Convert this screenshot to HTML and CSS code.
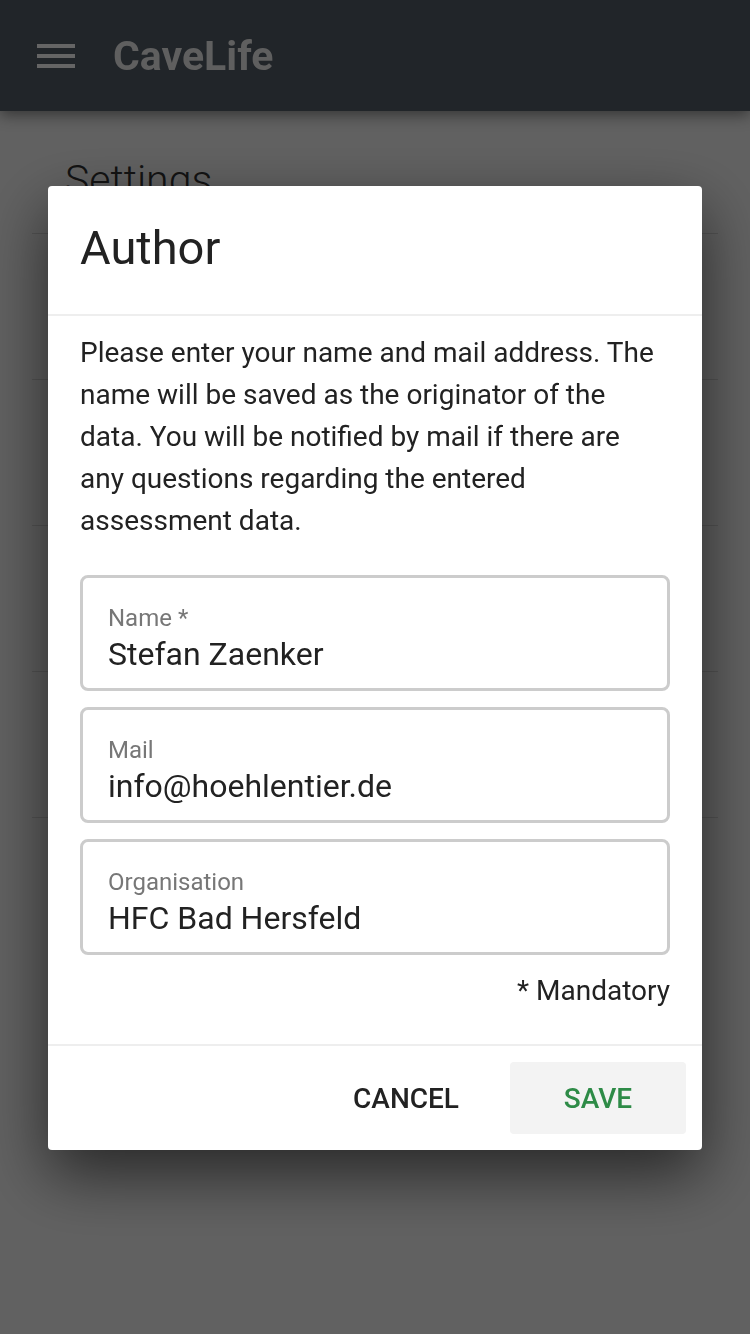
FILE: index.html
```html
<!DOCTYPE html>
<html lang="en">
<head>
  <meta charset="UTF-8" />
  <meta name="viewport" content="width=device-width, initial-scale=1.0"/>
  <title>CaveLife</title>
  <link rel="stylesheet" href="styles.css">
</head>
<body>

  <header class="app-bar">
    <div class="menu-btn">
      <span></span><span></span><span></span>
    </div>
    <div class="app-title">CaveLife</div>
  </header>

  <main class="page">
    <h1 class="page-title">Settings</h1>
    <ul class="settings-list">
      <li></li>
      <li></li>
      <li></li>
      <li></li>
      <li></li>
    </ul>
  </main>

  <div class="overlay">
    <div class="dialog">
      <div class="dialog-header">
        <h2>Author</h2>
      </div>
      <div class="dialog-body">
        <p class="intro">Please enter your name and mail address. The name will be saved as the originator of the data. You will be notified by mail if there are any questions regarding the entered assessment data.</p>

        <label class="field">
          <span class="field-label">Name *</span>
          <input type="text" value="Stefan Zaenker" />
        </label>
        <label class="field">
          <span class="field-label">Mail</span>
          <input type="text" value="info@hoehlentier.de" />
        </label>
        <label class="field">
          <span class="field-label">Organisation</span>
          <input type="text" value="HFC Bad Hersfeld" />
        </label>

        <div class="hint">* Mandatory</div>
      </div>
      <div class="dialog-footer">
        <button class="btn">Cancel</button>
        <button class="btn btn-save">Save</button>
      </div>
    </div>
  </div>

</body>
</html>
```

FILE: styles.css
```css
body {
  margin: 0;
  font-family: Roboto, 'Liberation Sans', sans-serif;
  background: #ffffff;
  color: #222;
  height: 1334px;
  overflow: hidden;
}
.app-bar {
  position: relative;
  z-index: 20;
  height: 111px;
  background: #212529;
  display: flex;
  align-items: center;
  padding-left: 37px;
  box-shadow: 0 4px 14px rgba(0, 0, 0, 0.45);
}
.menu-btn {
  width: 38px;
  display: flex;
  flex-direction: column;
  gap: 6px;
  margin-top: 1px;
}
.menu-btn span {
  display: block;
  height: 4px;
  background: #656565;
}
.app-title {
  margin-left: 38px;
  font-size: 41px;
  font-weight: bold;
  color: #5f5f5f;
}
.page {
  padding: 40px 32px 0;
}
.page-title {
  margin: 0;
  padding: 0 0 24px 33px;
  font-size: 41px;
  font-weight: 300;
  line-height: 58px;
  color: #333;
}
.settings-list {
  list-style: none;
  margin: 0;
  padding: 0;
}
.settings-list li {
  height: 145px;
  border-top: 1px solid #dddddd;
}
.overlay {
  position: fixed;
  inset: 0;
  z-index: 10;
  background: rgba(0, 0, 0, 0.62);
  display: flex;
  align-items: center;
  justify-content: center;
}
.dialog {
  width: 654px;
  margin-top: 2px;
  background: #fff;
  border-radius: 4px;
  box-shadow: 0 24px 64px rgba(0, 0, 0, 0.6);
}
.dialog-header {
  padding: 32px 32px 0;
  height: 96px;
  border-bottom: 2px solid #eeeeee;
}
.dialog-header h2 {
  margin: 0;
  font-size: 47px;
  font-weight: 400;
  line-height: 60px;
  color: #222;
}
.dialog-body {
  padding: 16px 32px 33px;
}
.intro {
  margin: 0 0 33px;
  font-size: 28px;
  line-height: 42px;
  color: #222;
}
.field {
  display: block;
  border: 3px solid #cccccc;
  border-radius: 8px;
  padding: 26px 25px 15px;
  margin-bottom: 16px;
}
.field-label {
  display: block;
  font-size: 24px;
  line-height: 28px;
  color: #777;
}
.field input {
  display: block;
  width: 100%;
  border: none;
  outline: none;
  padding: 0;
  margin-top: 3px;
  font-family: inherit;
  font-size: 32px;
  line-height: 38px;
  height: 38px;
  color: #222;
  background: transparent;
}
.hint {
  text-align: right;
  font-size: 28px;
  line-height: 40px;
  color: #222;
}
.dialog-footer {
  border-top: 2px solid #eeeeee;
  padding: 16px;
  display: flex;
  justify-content: flex-end;
  gap: 16px;
}
.btn {
  width: 176px;
  height: 72px;
  border: none;
  border-radius: 4px;
  background: transparent;
  font-family: inherit;
  font-size: 28px;
  font-weight: 500;
  text-transform: uppercase;
  color: #222;
  cursor: pointer;
}
.btn-save {
  background: #f3f3f3;
  color: #2e8b47;
}
```
